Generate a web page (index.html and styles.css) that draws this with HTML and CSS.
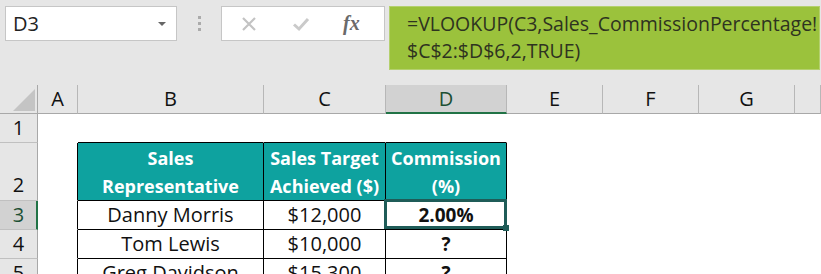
FILE: index.html
```html
<!DOCTYPE html>
<html lang="en">
<head>
<meta charset="UTF-8">
<title>VLOOKUP Commission</title>
<link rel="stylesheet" href="styles.css">
</head>
<body>

<div class="toolbar">
  <div class="name-box">
    <span>D3</span>
    <span class="caret"></span>
  </div>
  <div class="grip"><i></i><i></i><i></i></div>
  <div class="fx-buttons">
    <svg class="icon" width="16" height="16" viewBox="0 0 16 16">
      <path d="M2 2 L14 14 M14 2 L2 14" stroke="#c3c3c3" stroke-width="2.2" fill="none"/>
    </svg>
    <svg class="icon" width="18" height="16" viewBox="0 0 18 16">
      <path d="M2 8.5 L7 13 L16 3" stroke="#cacaca" stroke-width="3" fill="none"/>
    </svg>
    <span class="fx">fx</span>
  </div>
  <div class="formula">=VLOOKUP(C3,Sales_CommissionPercentage!<br>$C$2:$D$6,2,TRUE)</div>
</div>

<div class="sheet">
  <!-- column headers -->
  <div class="hd corner"><span class="tri"></span></div>
  <div class="hd">A</div>
  <div class="hd">B</div>
  <div class="hd">C</div>
  <div class="hd active-col">D</div>
  <div class="hd">E</div>
  <div class="hd">F</div>
  <div class="hd">G</div>
  <div class="hd"></div>

  <!-- row 1 -->
  <div class="rh">1</div>
  <div class="c"></div>
  <div class="c top"></div>
  <div class="c top"></div>
  <div class="c top"></div>
  <div class="c"></div>
  <div class="c"></div>
  <div class="c"></div>
  <div class="c"></div>

  <!-- row 2 -->
  <div class="rh bottom">2</div>
  <div class="c edge"></div>
  <div class="c t th">Sales<br>Representative</div>
  <div class="c t th">Sales Target<br>Achieved ($)</div>
  <div class="c t th">Commission<br>(%)</div>
  <div class="c"></div>
  <div class="c"></div>
  <div class="c"></div>
  <div class="c"></div>

  <!-- row 3 -->
  <div class="rh active-row">3</div>
  <div class="c edge"></div>
  <div class="c t">Danny Morris</div>
  <div class="c t">$12,000</div>
  <div class="c t b selected">2.00%</div>
  <div class="c"></div>
  <div class="c"></div>
  <div class="c"></div>
  <div class="c"></div>

  <!-- row 4 -->
  <div class="rh">4</div>
  <div class="c edge"></div>
  <div class="c t">Tom Lewis</div>
  <div class="c t">$10,000</div>
  <div class="c t b">?</div>
  <div class="c"></div>
  <div class="c"></div>
  <div class="c"></div>
  <div class="c"></div>

  <!-- row 5 -->
  <div class="rh">5</div>
  <div class="c edge"></div>
  <div class="c t">Greg Davidson</div>
  <div class="c t">$15,300</div>
  <div class="c t b">?</div>
  <div class="c"></div>
  <div class="c"></div>
  <div class="c"></div>
  <div class="c"></div>
</div>

</body>
</html>
```

FILE: styles.css
```css
body {
  margin: 0;
  padding: 0;
  background-color: #e6e6e6;
  font-family: "Open Sans", "Noto Sans", sans-serif;
  color: #111;
  overflow: hidden;
}

.toolbar {
  display: flex;
  align-items: flex-start;
  height: 85px;
  padding: 6px 0 0 5px;
  box-sizing: border-box;
}

.name-box {
  width: 172px;
  height: 35px;
  box-sizing: border-box;
  background-color: #fff;
  border: 1px solid #c6c6c6;
  display: flex;
  align-items: center;
  justify-content: space-between;
  padding: 0 10px 0 7px;
  font-size: 20px;
  color: #222;
}

.caret {
  width: 0;
  height: 0;
  border-left: 4px solid transparent;
  border-right: 4px solid transparent;
  border-top: 4px solid #666;
}

.grip {
  width: 44px;
  height: 35px;
  display: flex;
  flex-direction: column;
  align-items: center;
  justify-content: center;
  gap: 3px;
}

.grip i {
  display: block;
  width: 3px;
  height: 3px;
  background-color: #ababab;
}

.fx-buttons {
  width: 164px;
  height: 35px;
  box-sizing: border-box;
  background-color: #fff;
  border: 1px solid #c6c6c6;
  display: flex;
  align-items: center;
  padding-left: 19px;
  gap: 35px;
}

.fx {
  font-family: "Liberation Serif", serif;
  font-style: italic;
  font-weight: bold;
  font-size: 20px;
  color: #6a6a6a;
  margin-left: -2px;
}

.formula {
  margin-left: 4px;
  width: 431px;
  height: 64px;
  box-sizing: border-box;
  background-color: #9bc23c;
  border: 1px solid #b4d06e;
  padding: 3px 0 0 17px;
  font-size: 19.5px;
  line-height: 27px;
  color: #2e3320;
  white-space: nowrap;
}

.sheet {
  display: grid;
  grid-template-columns: 38px 40px 186px 122px 121px 96px 96px 96px 1fr;
  grid-template-rows: 29px 29px 58px 29px 29px 29px;
  background-color: #fff;
}

.hd {
  background-color: #e6e6e6;
  border-right: 1px solid #b7b7b7;
  border-bottom: 1px solid #a8a8a8;
  box-sizing: border-box;
  text-align: center;
  font-size: 20px;
  line-height: 28px;
}

.corner {
  position: relative;
  border-right-color: #a8a8a8;
}

.tri {
  position: absolute;
  left: 13px;
  top: 4px;
  width: 22px;
  height: 22px;
  background-color: #c4c4c4;
  clip-path: polygon(100% 0, 100% 100%, 0 100%);
}

.hd.active-col {
  background-color: #d2d2d2;
  border-bottom: 2px solid #217346;
  line-height: 27px;
  color: #1c4f33;
}

.rh {
  background-color: #e6e6e6;
  border-right: 1px solid #a8a8a8;
  border-bottom: 1px solid #c0c0c0;
  box-sizing: border-box;
  text-align: center;
  font-size: 20px;
  line-height: 28px;
}

.rh.bottom {
  display: flex;
  align-items: flex-end;
  justify-content: center;
  padding-bottom: 1px;
}

.rh.active-row {
  background-color: #d2d2d2;
  border-right: 2px solid #217346;
  padding-left: 1px;
  color: #1c4f33;
}

.c {
  box-sizing: border-box;
  border-right: 1px solid #fff;
  border-bottom: 1px solid #fff;
  font-size: 20px;
  line-height: 28px;
  text-align: center;
  white-space: nowrap;
  overflow: hidden;
}

.c.top {
  border-bottom-color: #000;
}

.c.edge {
  border-right-color: #000;
}

.c.t {
  border-right-color: #000;
  border-bottom-color: #000;
}

.c.th {
  background-color: #0ea29f;
  color: #fff;
  font-weight: bold;
  font-size: 18px;
  line-height: 28px;
  display: flex;
  flex-direction: column;
  justify-content: flex-end;
  padding-bottom: 0;
}

.c.b {
  font-weight: bold;
  font-size: 19px;
}

.c.selected {
  position: relative;
  overflow: visible;
}

.c.selected::after {
  content: "";
  position: absolute;
  left: -2px;
  top: -2px;
  right: -1px;
  bottom: 0;
  border: 3px solid #1f5c58;
}

.c.selected::before {
  content: "";
  position: absolute;
  right: -3px;
  bottom: -2px;
  width: 6px;
  height: 6px;
  background-color: #1f5c58;
  z-index: 1;
}
```
